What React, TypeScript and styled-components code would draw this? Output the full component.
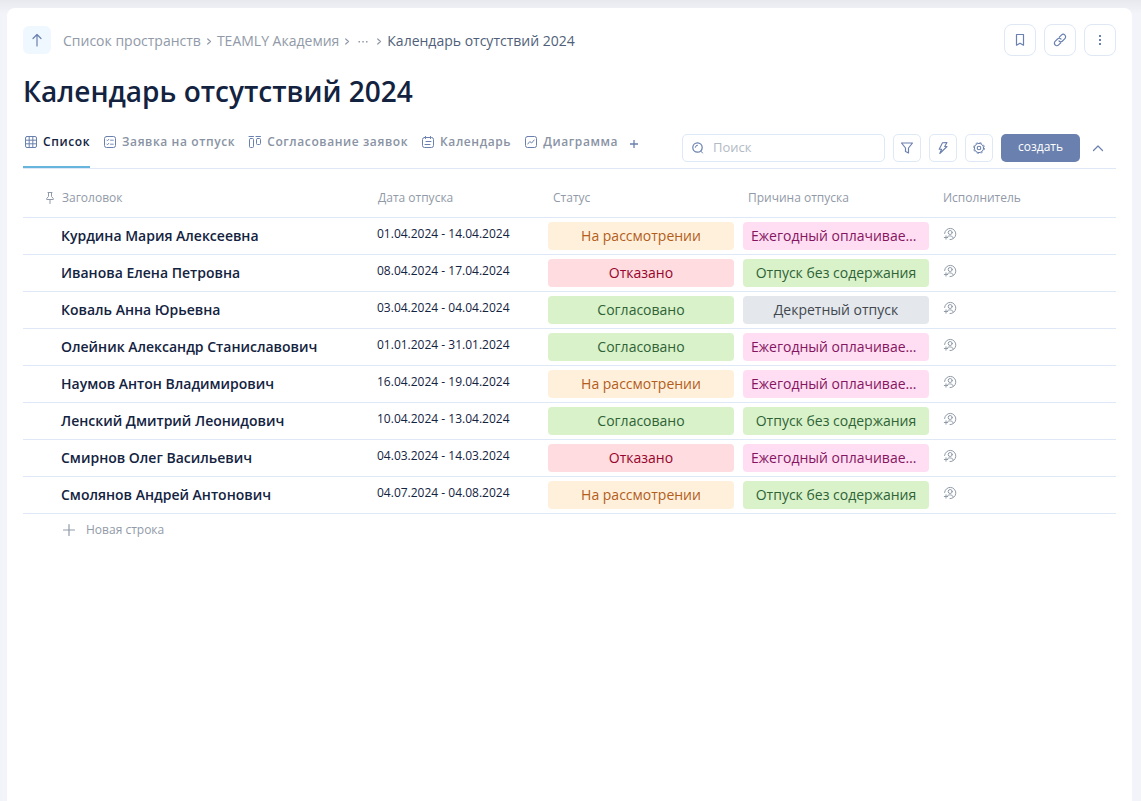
import React from "react";
import styled, { createGlobalStyle, css } from "styled-components";

const GlobalStyle = createGlobalStyle`
  *, *::before, *::after { box-sizing: border-box; }
  body {
    margin: 0;
    min-height: 100vh;
    background: linear-gradient(#e8e9ee, #f3f4f9 14px) #f3f4f9 no-repeat;
    color: #13233f;
    font-family: "Open Sans", "Noto Sans", sans-serif;
    font-size: 14px;
    line-height: 20px;
  }
  button, input { font: inherit; color: inherit; }
  button { padding: 0; border: 0; background: none; cursor: pointer; }
`;

const Page = styled.div`
  display: flex;
  min-height: 100vh;
  padding: 8px 9px 0 7px;
`;

const Card = styled.main`
  flex: 1;
  min-width: 0;
  padding: 16px 16px 32px;
  background: #fff;
  border-radius: 8px 8px 0 0;
`;

const TopBar = styled.header`
  display: flex;
  align-items: center;
  justify-content: space-between;
`;

const Crumbs = styled.nav`
  display: flex;
  align-items: center;
  color: #919aa8;
`;

const UpButton = styled.button`
  display: grid;
  place-items: center;
  width: 28px;
  height: 28px;
  margin-right: 12px;
  border-radius: 6px;
  background: #f0f8ff;
  color: #6a80ae;
`;

const CrumbList = styled.ol`
  display: flex;
  align-items: center;
  margin: 0;
  padding: 2px 0 0;
  list-style: none;
`;

const Crumb = styled.li`
  display: flex;
  align-items: center;

  a {
    display: flex;
    align-items: center;
    color: inherit;
    text-decoration: none;
  }

  a[aria-current] {
    color: #505f79;
  }
`;

const Actions = styled.div`
  display: flex;
  gap: 8px;
`;

const IconButton = styled.button<{ $large?: boolean }>`
  display: grid;
  place-items: center;
  flex: none;
  width: ${(p) => (p.$large ? 32 : 28)}px;
  height: ${(p) => (p.$large ? 32 : 28)}px;
  border: 1px solid #dfe8f6;
  border-radius: ${(p) => (p.$large ? 8 : 5)}px;
  background: #fff;
  color: #6a80ae;
`;

const Title = styled.h1`
  margin: 15px 0 23px;
  font-size: 28px;
  font-weight: 600;
  line-height: 40px;
`;

const ViewBar = styled.div`
  display: flex;
  justify-content: space-between;
  height: 35px;
  border-bottom: 1px solid #dfe8f6;
`;

const Tabs = styled.div`
  display: flex;
  gap: 12px;
`;

const Tab = styled.button<{ $active?: boolean }>`
  display: flex;
  gap: 4px;
  height: 34px;
  color: #8993a4;
  font-size: 12px;
  font-weight: 600;
  line-height: 16px;
  letter-spacing: 0.05em;
  white-space: nowrap;

  svg {
    color: #6a80ae;
  }

  ${(p) =>
    p.$active &&
    css`
      color: #13233f;
      border-bottom: 2px solid #66b5dc;
    `}
`;

const AddTab = styled.button`
  display: flex;
  align-items: center;
  height: 20px;
  color: #6a80ae;
`;

const Tools = styled.div`
  display: flex;
  gap: 8px;
`;

const SearchBox = styled.label`
  display: flex;
  align-items: center;
  gap: 7px;
  width: 203px;
  height: 28px;
  padding: 0 7px;
  border: 1px solid #dfe8f6;
  border-radius: 5px;
  color: #6a80ae;

  input {
    flex: 1;
    min-width: 0;
    height: 20px;
    padding: 0 0 2px;
    border: 0;
    outline: 0;
    background: none;
    color: #13233f;
    font-size: 13px;
  }

  input::placeholder {
    color: #b3bac5;
    opacity: 1;
  }
`;

const CreateButton = styled.button`
  width: 79px;
  height: 28px;
  padding-bottom: 2px;
  border-radius: 5px;
  background: #6a80ae;
  color: #fff;
  font-size: 12px;
  font-weight: 500;
`;

const CollapseButton = styled.button`
  display: grid;
  place-items: center;
  width: 20px;
  height: 28px;
  margin-right: 8px;
  color: #6a80ae;
`;

const Table = styled.table`
  width: 100%;
  table-layout: fixed;
  border-collapse: separate;
  border-spacing: 0;
`;

const HeadCell = styled.th<{ $width?: number; $first?: boolean }>`
  width: ${(p) => (p.$width ? `${p.$width}px` : "auto")};
  height: 49px;
  padding: 10px 10px 0;
  padding-left: ${(p) => (p.$first ? 19 : 10)}px;
  border-bottom: 1px solid #dfe8f6;
  color: #919aa8;
  font-size: 12px;
  font-weight: 400;
  text-align: left;
`;

const HeadLabel = styled.span`
  display: flex;
  align-items: center;
  gap: 4px;
`;

const Cell = styled.td`
  height: 37px;
  padding: 4px 4px 4px 5px;
  border-bottom: 1px solid #dfe8f6;
`;

const NameCell = styled(Cell).attrs({ as: "th", scope: "row" })`
  padding-left: 38px;
  font-weight: 600;
  text-align: left;
`;

const DateCell = styled(Cell)`
  padding: 0 4px 4px 9px;
  font-size: 12px;
`;

const PersonCell = styled(Cell)`
  padding: 0 8px 4px 9px;
  color: #919aa8;

  svg {
    display: block;
  }
`;

type Tone = "orange" | "red" | "green" | "pink" | "gray";

const tones: Record<Tone, [string, string]> = {
  orange: ["#fff0dc", "#b35d1b"],
  red: ["#ffdcdf", "#97042c"],
  green: ["#d9f2ca", "#2f6236"],
  pink: ["#ffdef4", "#85155f"],
  gray: ["#e4e7ec", "#42474f"],
};

const Pill = styled.div<{ $tone: Tone }>`
  height: 28px;
  padding: 0 8px;
  border-radius: 4px;
  background: ${(p) => tones[p.$tone][0]};
  color: ${(p) => tones[p.$tone][1]};
  line-height: 28px;
  text-align: center;
  white-space: nowrap;
  overflow: hidden;
  text-overflow: ellipsis;
`;

const AddRow = styled.button`
  display: flex;
  align-items: center;
  gap: 9px;
  height: 32px;
  margin-left: 38px;
  color: #919aa8;
  font-size: 12px;
`;

const Icon = ({ size = 16, children }: { size?: number; children: React.ReactNode }) => (
  <svg
    width={size}
    height={size}
    viewBox={`0 0 ${size} ${size}`}
    fill="none"
    stroke="currentColor"
    strokeLinecap="round"
    strokeLinejoin="round"
    aria-hidden="true"
  >
    {children}
  </svg>
);

const ArrowUp = () => (
  <Icon>
    <path d="M8 14V2.500M4 6.500L8 2.500L12 6.500" strokeWidth="1.200" />
  </Icon>
);
const Chevron = () => (
  <Icon>
    <path d="M6.700 6L9.500 8.500L6.700 11" strokeWidth="1.200" />
  </Icon>
);
const Dots = () => (
  <Icon>
    <path d="M3.500 8H5V9.500H3.500ZM7.300 8H8.800V9.500H7.300ZM11 8H12.500V9.500H11Z" fill="currentColor" stroke="none" />
  </Icon>
);
const Bookmark = () => (
  <Icon>
    <path d="M4.500 2.500H11.500V13.200L8 11.200L4.500 13.200Z" strokeWidth="1.200" />
  </Icon>
);
const LinkIcon = () => (
  <Icon>
    <path d="M7.300 5.200L9.400 3.100A2.450 2.450 0 0 1 12.900 6.600L10.500 9A2.450 2.450 0 0 1 7 9M8.700 10.800L6.600 12.900A2.450 2.450 0 0 1 3.100 9.400L5.500 7A2.450 2.450 0 0 1 9 7" strokeWidth="1.200" />
  </Icon>
);
const MoreVertical = () => (
  <Icon>
    <path d="M7 3H9V5H7ZM7 7H9V9H7ZM7 11H9V13H7Z" fill="currentColor" stroke="none" />
  </Icon>
);
const GridIcon = () => (
  <Icon>
    <rect x="2.500" y="2.500" width="11" height="11" rx="1.500" />
    <path d="M6.200 2.500V13.500M9.800 2.500V13.500M2.500 6.200H13.500M2.500 9.800H13.500" />
  </Icon>
);
const FormIcon = () => (
  <Icon>
    <rect x="2.500" y="2.500" width="11" height="11" rx="2" />
    <path d="M4.700 6L5.500 6.800L6.800 5.300M8.500 6.200H11.300M4.700 10L5.500 10.800L6.800 9.300M8.500 10.200H11.300" strokeWidth="0.900" />
  </Icon>
);
const BoardIcon = () => (
  <Icon>
    <path d="M2 2.500H6.500M9 2.500H13.500" />
    <rect x="2.500" y="4.500" width="4" height="9" rx="1" />
    <rect x="9.500" y="4.500" width="4" height="6" rx="1" />
  </Icon>
);
const CalendarIcon = () => (
  <Icon>
    <rect x="2.500" y="3.500" width="11" height="10" rx="2" />
    <path d="M5.500 2.500V4.500M10.500 2.500V4.500M6 7.500H11M5 10.500H10" />
  </Icon>
);
const DiagramIcon = () => (
  <Icon>
    <rect x="2.500" y="2.500" width="11" height="11" rx="2" />
    <path d="M4.800 10L6.800 7.500L8.600 9L11.200 6" />
  </Icon>
);
const SmallPlus = () => (
  <Icon size={8}>
    <path d="M4 0V8M0 4H8" strokeWidth="1.300" strokeLinecap="butt" />
  </Icon>
);
const Plus = () => (
  <Icon>
    <path d="M8 2.500V13.500M2.500 8H13.500" strokeWidth="1.200" />
  </Icon>
);
const SearchIcon = () => (
  <Icon>
    <circle cx="7.500" cy="7.500" r="4.700" strokeWidth="1.200" />
    <path d="M5.300 7.300A2.200 2.200 0 0 1 7.500 5.200M11.300 11.500L12.500 13" />
  </Icon>
);
const FilterIcon = () => (
  <Icon>
    <path d="M2.500 3H13.500L9.500 8V13L6.500 11.500V8Z" strokeWidth="1.200" />
  </Icon>
);
const BoltIcon = () => (
  <Icon>
    <path d="M7.500 2.700L12 2.500L9.700 6.500H12L4.800 13.500L6.600 9.300H4.200Z" strokeWidth="1.100" />
  </Icon>
);
const GearIcon = () => (
  <Icon>
    <circle cx="8" cy="8" r="4.600" />
    <circle cx="8" cy="8" r="5.400" strokeWidth="0.900" strokeDasharray="2.200 2.040" strokeLinecap="butt" />
    <circle cx="8" cy="8" r="1.800" strokeWidth="1.100" />
  </Icon>
);
const ChevronUp = () => (
  <Icon>
    <path d="M3.500 10.500L8 6L12.500 10.500" strokeWidth="1.200" />
  </Icon>
);
const PinIcon = () => (
  <Icon>
    <path d="M6 2.500H10M6.500 2.500V6.500L4.700 8.500V9.500H11.300V8.500L9.500 6.500V2.500M8 9.500V13.500" />
  </Icon>
);
const PersonIcon = () => (
  <Icon>
    <path d="M2.600 7.500A5.600 5.600 0 1 1 8 13.600" />
    <circle cx="8.200" cy="6.500" r="2" />
    <path d="M5.500 10.800C6 9.300 10.500 9.300 11.200 11.800M4 9.800V13.200M2.300 11.500H5.700" />
  </Icon>
);

const views = [
  { label: "Список", icon: <GridIcon />, active: true },
  { label: "Заявка на отпуск", icon: <FormIcon /> },
  { label: "Согласование заявок", icon: <BoardIcon /> },
  { label: "Календарь", icon: <CalendarIcon /> },
  { label: "Диаграмма", icon: <DiagramIcon /> },
];

const statusTone: Record<string, Tone> = {
  "На рассмотрении": "orange",
  Отказано: "red",
  Согласовано: "green",
};

const reasonTone: Record<string, Tone> = {
  "Ежегодный оплачиваемый": "pink",
  "Отпуск без содержания": "green",
  "Декретный отпуск": "gray",
};

const rows = [
  ["Курдина Мария Алексеевна", "01.04.2024 - 14.04.2024", "На рассмотрении", "Ежегодный оплачиваемый"],
  ["Иванова Елена Петровна", "08.04.2024 - 17.04.2024", "Отказано", "Отпуск без содержания"],
  ["Коваль Анна Юрьевна", "03.04.2024 - 04.04.2024", "Согласовано", "Декретный отпуск"],
  ["Олейник Александр Станиславович", "01.01.2024 - 31.01.2024", "Согласовано", "Ежегодный оплачиваемый"],
  ["Наумов Антон Владимирович", "16.04.2024 - 19.04.2024", "На рассмотрении", "Ежегодный оплачиваемый"],
  ["Ленский Дмитрий Леонидович", "10.04.2024 - 13.04.2024", "Согласовано", "Отпуск без содержания"],
  ["Смирнов Олег Васильевич", "04.03.2024 - 14.03.2024", "Отказано", "Ежегодный оплачиваемый"],
  ["Смолянов Андрей Антонович", "04.07.2024 - 04.08.2024", "На рассмотрении", "Отпуск без содержания"],
];

export default function App() {
  return (
    <>
      <GlobalStyle />
      <Page>
        <Card>
          <TopBar>
            <Crumbs aria-label="Навигация">
              <UpButton aria-label="Наверх">
                <ArrowUp />
              </UpButton>
              <CrumbList>
                <Crumb>
                  <a href="#spaces">Список пространств</a>
                  <Chevron />
                </Crumb>
                <Crumb>
                  <a href="#academy">TEAMLY Академия</a>
                  <Chevron />
                </Crumb>
                <Crumb>
                  <a href="#more" aria-label="Ещё">
                    <Dots />
                  </a>
                  <Chevron />
                </Crumb>
                <Crumb>
                  <a href="#calendar" aria-current="page">
                    Календарь отсутствий 2024
                  </a>
                </Crumb>
              </CrumbList>
            </Crumbs>
            <Actions>
              <IconButton $large aria-label="В закладки">
                <Bookmark />
              </IconButton>
              <IconButton $large aria-label="Скопировать ссылку">
                <LinkIcon />
              </IconButton>
              <IconButton $large aria-label="Меню">
                <MoreVertical />
              </IconButton>
            </Actions>
          </TopBar>

          <Title>Календарь отсутствий 2024</Title>

          <ViewBar>
            <Tabs>
              {views.map((v) => (
                <Tab key={v.label} $active={v.active} aria-pressed={!!v.active}>
                  {v.icon}
                  {v.label}
                </Tab>
              ))}
              <AddTab aria-label="Добавить представление">
                <SmallPlus />
              </AddTab>
            </Tabs>
            <Tools>
              <SearchBox>
                <SearchIcon />
                <input type="text" placeholder="Поиск" aria-label="Поиск" />
              </SearchBox>
              <IconButton aria-label="Фильтр">
                <FilterIcon />
              </IconButton>
              <IconButton aria-label="Автоматизации">
                <BoltIcon />
              </IconButton>
              <IconButton aria-label="Настройки">
                <GearIcon />
              </IconButton>
              <CreateButton>создать</CreateButton>
              <CollapseButton aria-label="Свернуть">
                <ChevronUp />
              </CollapseButton>
            </Tools>
          </ViewBar>

          <Table>
            <thead>
              <tr>
                <HeadCell $width={345} $first>
                  <HeadLabel>
                    <PinIcon />
                    Заголовок
                  </HeadLabel>
                </HeadCell>
                <HeadCell $width={175}>Дата отпуска</HeadCell>
                <HeadCell $width={195}>Статус</HeadCell>
                <HeadCell $width={195}>Причина отпуска</HeadCell>
                <HeadCell>Исполнитель</HeadCell>
              </tr>
            </thead>
            <tbody>
              {rows.map(([name, date, status, reason]) => (
                <tr key={name}>
                  <NameCell>{name}</NameCell>
                  <DateCell>{date}</DateCell>
                  <Cell>
                    <Pill $tone={statusTone[status]}>{status}</Pill>
                  </Cell>
                  <Cell>
                    <Pill $tone={reasonTone[reason]}>{reason}</Pill>
                  </Cell>
                  <PersonCell>
                    <PersonIcon />
                  </PersonCell>
                </tr>
              ))}
            </tbody>
          </Table>
          <AddRow>
            <Plus />
            Новая строка
          </AddRow>
        </Card>
      </Page>
    </>
  );
}
